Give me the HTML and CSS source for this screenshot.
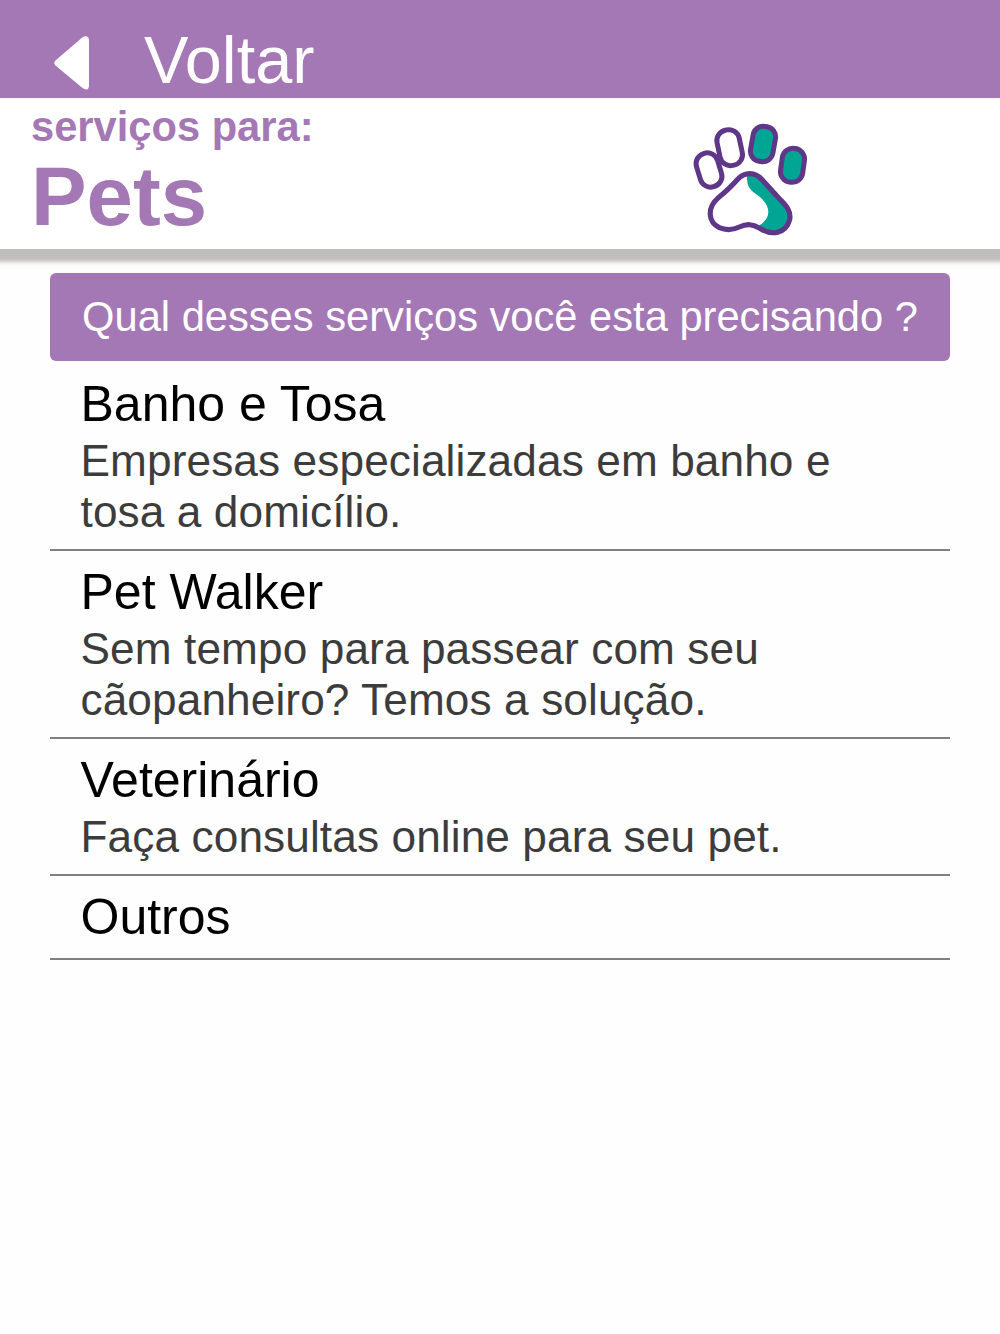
FILE: index.html
```
<!DOCTYPE html>
<html lang="pt-br">
<head>
<meta charset="UTF-8">
<meta name="viewport" content="width=device-width, initial-scale=1.0">
<title>Pets</title>
<link rel="stylesheet" href="styles.css">
</head>
<body>
	<nav class="topo">
		<svg class="seta" viewBox="0 0 36 54">
			<path d="M28.5 1.2Q35 -2 35 5V49Q35 56 28.5 52L1.5 29.5Q-1 27 1.5 24.5Z"/>
		</svg>
		<span class="voltar">Voltar</span>
	</nav>
	<header class="cabecalho">
		<div class="titulos">
			<h2 class="sub">serviços para:</h2>
			<h1 class="categoria">Pets</h1>
		</div>
		<svg class="pata" viewBox="0 0 420 420">
			<g class="dedo">
				<rect x="54" y="128" width="66" height="104" rx="32" transform="rotate(-17 87 180)"/>
				<rect x="115" y="59" width="68" height="108" rx="32" transform="rotate(-12 149 113)"/>
				<rect class="verde" x="215" y="49" width="68" height="106" rx="31" transform="rotate(10 249 102)"/>
				<rect class="verde" x="304" y="115" width="67" height="102" rx="32" transform="rotate(8 338 166)"/>
			</g>
			<path class="verde" d="M201 190C199 228 208 240 232 255C274 285 276 323 238 346C274 374 318 371 328 330C333 300 315 286 300 270L242 206Q225 188 201 190Z"/>
			<path class="contorno" d="M210 191C190 191 180 200 171 210C151 233 136 246 113 265C82 292 83 336 118 353C137 361 155 362 178 351C202 340 218 343 238 354C275 379 318 371 329 329C334 302 317 286 301 269L245 208C234 196 225 191 210 191Z"/>
		</svg>
	</header>
	<main class="conteudo">
		<div class="pergunta">Qual desses serviços você esta precisando ?</div>
		<ul class="lista">
			<li class="item">
				<h3 class="nome">Banho e Tosa</h3>
				<p class="descricao">Empresas especializadas em banho e tosa a domicílio.</p>
			</li>
			<li class="item">
				<h3 class="nome">Pet Walker</h3>
				<p class="descricao">Sem tempo para passear com seu cãopanheiro? Temos a solução.</p>
			</li>
			<li class="item">
				<h3 class="nome">Veterinário</h3>
				<p class="descricao">Faça consultas online para seu pet.</p>
			</li>
			<li class="item">
				<h3 class="nome">Outros</h3>
			</li>
		</ul>
	</main>
</body>
</html>
```
FILE: styles.css
```
* {
	box-sizing: border-box;
	margin: 0;
	padding: 0;
}
body {
	background-color: #fefefe;
	font-family: Arial, "Liberation Sans", sans-serif;
}
.topo {
	background-color: #a478b4;
	color: white;
	display: flex;
	height: 97.6px;
	padding: 21px 0 0 54px;
}
.seta {
	fill: white;
	height: 54px;
	margin-top: 15px;
	width: 36px;
}
.voltar {
	font-size: 66.67px;
	line-height: 79px;
	margin-left: 54px;
}
.cabecalho {
	background-color: white;
	box-shadow: 0 8.5px 4px 4px #c0bfbd;
	color: #a478b4;
	display: flex;
	height: 151.4px;
	justify-content: space-between;
	padding: 5px 180px 0 31px;
	/* keeps the shadow off the bar above */
	clip-path: inset(0 0 -20px 0);
}
.sub {
	font-size: 41.67px;
	line-height: 47px;
}
.categoria {
	font-size: 83.33px;
	line-height: 93px;
}
.pata {
	height: 140px;
	margin-top: 7.4px;
	width: 140px;
}
.verde {
	fill: #00a693;
}
.dedo {
	fill: none;
	stroke: #5f3788;
	stroke-width: 15;
}
.contorno {
	fill: none;
	stroke: #5f3788;
	stroke-width: 15.5;
}
.conteudo {
	padding: 24.5px 50px 0;
}
.pergunta {
	background-color: #a478b4;
	border-radius: 6px;
	color: white;
	font-size: 41.67px;
	height: 88px;
	line-height: 88px;
	text-align: center;
}
.lista {
	list-style: none;
	padding-top: 1.5px;
}
.item {
	border-bottom: 2px solid #808080;
	padding: 13.4px 90px 11.4px 30.5px;
}
.nome {
	color: black;
	font-size: 50px;
	font-weight: normal;
	line-height: 57.5px;
}
.descricao {
	color: #3c3c3c;
	font-size: 44.2px;
	letter-spacing: 0.1px;
	line-height: 50.7px;
	padding-top: 2.2px;
}
```
